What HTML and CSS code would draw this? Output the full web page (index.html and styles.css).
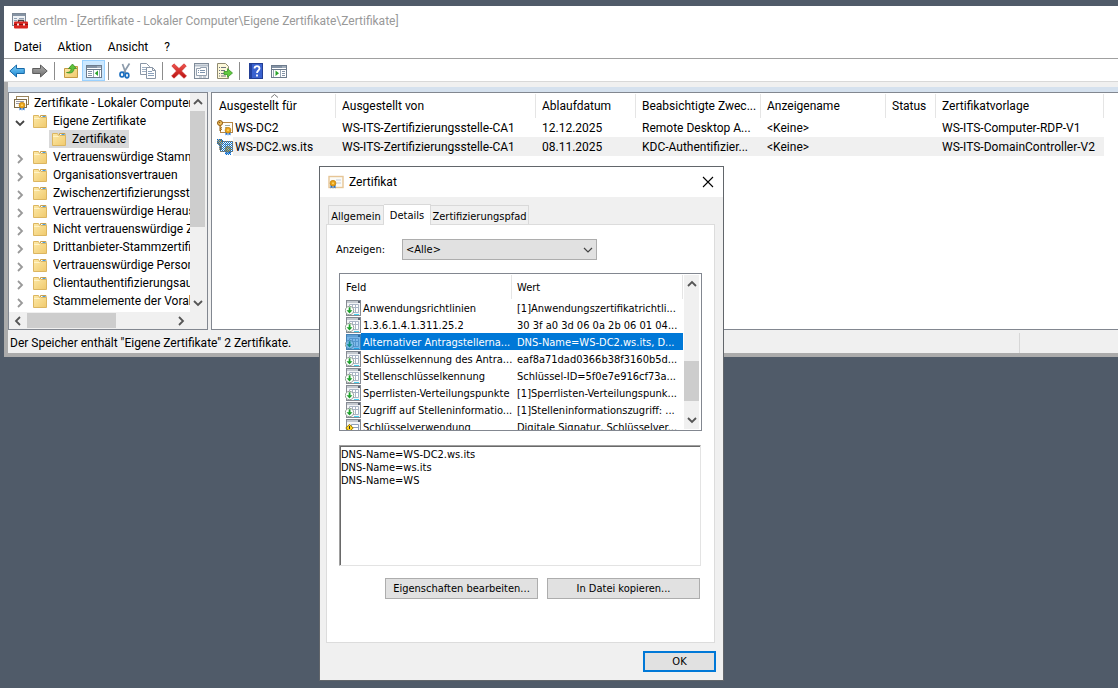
FILE: index.html
```html
<!DOCTYPE html>
<html lang="de">
<head>
<meta charset="utf-8">
<title>certlm - Zertifikate</title>
<link rel="stylesheet" href="styles.css">
</head>
<body>
<svg class="defs" aria-hidden="true">
  <defs>
    <linearGradient id="gFolder" x1="0" y1="0" x2="1" y2="1"><stop offset="0" stop-color="#fdeaa9"/><stop offset="1" stop-color="#f0c96c"/></linearGradient>
    <linearGradient id="gBlue" x1="0" y1="0" x2="0" y2="1"><stop offset="0" stop-color="#7fd0fa"/><stop offset="1" stop-color="#1c86cf"/></linearGradient>
    <linearGradient id="gGray" x1="0" y1="0" x2="0" y2="1"><stop offset="0" stop-color="#b0b0b0"/><stop offset="1" stop-color="#6c6c6c"/></linearGradient>
    <linearGradient id="gRed" x1="0" y1="0" x2="0" y2="1"><stop offset="0" stop-color="#f0564e"/><stop offset="1" stop-color="#b80f0f"/></linearGradient>
    <pattern id="dots" width="2" height="2" patternUnits="userSpaceOnUse"><path d="M0 0h1v1H0zM1 1h1v1H1z" fill="#0a6fce" shape-rendering="crispEdges"/></pattern>
    <symbol id="folder" viewBox="0 0 16 16">
      <path d="M8.500 5V2.500h5.500V5" fill="#fff" stroke="#c9a04c"/>
      <path d="M10.500 3.500h3" stroke="#4a9fe0"/>
      <path d="M1.500 2.500h5l1 2h7v10h-13z" fill="url(#gFolder)" stroke="#dcb661"/>
      <path d="M2 5.500h5.500l1-1" fill="none" stroke="#fff3c8"/>
    </symbol>
    <symbol id="chev-r" viewBox="0 0 10 10"><path d="M3 1l4 4-4 4" fill="none" stroke="currentColor" stroke-width="1.800"/></symbol>
    <symbol id="chev-l" viewBox="0 0 10 10"><path d="M7 1L3 5l4 4" fill="none" stroke="currentColor" stroke-width="1.800"/></symbol>
    <symbol id="chev-d" viewBox="0 0 10 10"><path d="M1 3l4 4 4-4" fill="none" stroke="currentColor" stroke-width="1.800"/></symbol>
    <symbol id="chev-u" viewBox="0 0 10 10"><path d="M1 7l4-4 4 4" fill="none" stroke="currentColor" stroke-width="1.800"/></symbol>
    <symbol id="chev-thin" viewBox="0 0 10 10"><path d="M1 3l4 4 4-4" fill="none" stroke="currentColor" stroke-width="1.200"/></symbol>
    <symbol id="ribbon" viewBox="0 0 8 9">
      <path d="M1.500 4.500h2v4l-1-1-1 1zM4.500 4.500h2v4l-1-1-1 1z" fill="#1f6fd0"/>
      <circle cx="4" cy="3.200" r="2.900" fill="#e8a21a" stroke="#b97808" stroke-width=".6"/><circle cx="4" cy="3.200" r="1" fill="#ffd766"/>
    </symbol>
    <symbol id="keycert" viewBox="0 0 16 16">
      <rect x="3.500" y="2.500" width="12" height="10" fill="#fffdf6" stroke="#b78746"/>
      <path d="M8 5.500h5M8 7.500h2" stroke="#9aa"/>
      <circle cx="3" cy="3" r="2.500" fill="#f2c25c" stroke="#8f5a14"/><circle cx="2.500" cy="2.500" r=".8" fill="#8f5a14"/><path d="M3 5.500v5.500l1.500-1.500L3.500 8.500 5 7.500" fill="#f2c25c" stroke="#8f5a14"/>
      <use href="#ribbon" x="7" y="7" width="8" height="9"/>
    </symbol>
    <symbol id="ext" viewBox="0 0 16 16">
      <rect x="1.500" y=".5" width="14" height="15" fill="#f3f4f6" stroke="#858a92"/>
      <path d="M2 2h11" stroke="#c3c8cf" stroke-width="2"/><path d="M13 1h2v2h-2z" fill="#5b6270"/>
      <path d="M4.500 4.500h9v8h-9zM4.500 7.500h9M7.500 4.500v8M10.500 4.500v8" fill="#fff" stroke="#a9b4c4"/>
      <path d="M9 14.500h5" stroke="#47d0ee"/>
      <circle cx="4.500" cy="10.500" r="4.200" fill="#fff" stroke="#7d8a7d" stroke-width=".8"/>
      <path d="M3.700 7.300h1.800v3h2l-3 3.300-3-3.300h2.200z" fill="#1fa12c"/>
    </symbol>
    <symbol id="extkey" viewBox="0 0 16 16">
      <rect x="1.500" y=".5" width="14" height="15" fill="#f3f4f6" stroke="#858a92"/>
      <path d="M2 2h11" stroke="#c3c8cf" stroke-width="2"/><path d="M13 1h2v2h-2z" fill="#5b6270"/>
      <path d="M6.500 5.500h7v6h-7zM6.500 8.500h7" fill="#fff" stroke="#8fa0b8"/>
      <path d="M.8 9l3.700-3.700L8.200 9l-3.700 3.700z" fill="#ffd21e" stroke="#9b7a00"/><path d="M4.500 7v3" stroke="#333"/>
    </symbol>
  </defs>
</svg>

<main class="desktop">
<section class="mmc" aria-label="certlm">
  <header class="titlebar">
    <svg class="app-icon" viewBox="0 0 16 16">
      <rect x=".5" y=".5" width="13" height="12" fill="#eef1f5" stroke="#7d8896"/>
      <path d="M1 2h12" stroke="#8593a4" stroke-width="2"/><path d="M2 5.500h3M2 7.500h3M7 5.500h5" stroke="#8fa0b4"/>
      <path d="M6.500 9V7.500h5V9" fill="none" stroke="#444" stroke-width="1.300"/>
      <rect x="2" y="8.500" width="14" height="7" rx="1" fill="#d9241f"/><path d="M2 11.500h14" stroke="#8d1010"/><path d="M5 10.500h2v2H5zM11 10.500h2v2h-2z" fill="#f6e6e6"/>
    </svg>
    <h1 class="title">certlm - [Zertifikate - Lokaler Computer\Eigene Zertifikate\Zertifikate]</h1>
  </header>
  <nav class="menubar">
    <button>Datei</button><button>Aktion</button><button>Ansicht</button><button>?</button>
  </nav>
  <div class="toolbar">
    <button aria-label="Zurück"><svg viewBox="0 0 16 16"><path d="M.8 8l6.700-6v3.500h7.800v5H7.500V14z" fill="url(#gBlue)" stroke="#1769a8"/></svg></button>
    <button aria-label="Vorwärts"><svg viewBox="0 0 16 16"><path d="M15.200 8L8.500 2v3.500H.7v5h7.800V14z" fill="url(#gGray)" stroke="#5d5d5d"/></svg></button>
    <span class="sep"></span>
    <button aria-label="Nach oben"><svg viewBox="0 0 16 16"><path d="M1.500 5.500h5l1-2h7v11h-13z" fill="url(#gFolder)" stroke="#c49a45"/><path d="M3.500 9.500C7 9.500 8 8 8 5.500H5.500L9.500 1l4 4.500H11C11 9 8.500 11 3.500 9.500z" fill="#5ec13c" stroke="#2f8a1e" stroke-width=".7"/></svg></button>
    <button class="on" aria-label="Konsolenstruktur"><svg viewBox="0 0 16 16"><rect x=".5" y="2.500" width="15" height="12" fill="#fff" stroke="#6d7b8c"/><path d="M1 4h14" stroke="#8392a4" stroke-width="2"/><path d="M11.500 4h1M13.500 4h1" stroke="#fff"/><path d="M1 6.500h14" stroke="#6d7b8c"/><path d="M2 8.500h4M2 10.500h4M2 12.500h4" stroke="#8494a6"/><path d="M7.500 7v7M13.500 7v7" stroke="#9aa7b5"/><path d="M12 7.500v5.500L8.800 10.300z" fill="#2ca52c"/></svg></button>
    <span class="sep"></span>
    <button aria-label="Ausschneiden"><svg viewBox="0 0 16 16"><path d="M5.500 1l3.200 9M12.500 .5L6.500 10" stroke="#8c9bab" stroke-width="1.700" fill="none"/><ellipse cx="5" cy="11.500" rx="2" ry="2.400" fill="none" stroke="#1b6fc0" stroke-width="1.700"/><ellipse cx="10" cy="12.500" rx="1.800" ry="2.300" fill="none" stroke="#1b6fc0" stroke-width="1.700"/></svg></button>
    <button aria-label="Kopieren"><svg viewBox="0 0 16 16"><path d="M.5.5h6l3 3v8h-9z" fill="#fff" stroke="#8a96a6"/><path d="M2 4.500h5M2 6.500h5M2 8.500h5" stroke="#9fb0c4"/><path d="M6.500 4.500h6l3 3v8h-9z" fill="#fff" stroke="#8a96a6"/><path d="M12.500 4.500v3h3" fill="none" stroke="#8a96a6"/><path d="M8 8.500h4M8 10.500h6M8 12.500h6" stroke="#8aa0bb"/></svg></button>
    <span class="sep"></span>
    <button aria-label="Löschen"><svg viewBox="0 0 16 16"><path d="M3 .8l5 4.700 5-4.700L15.300 3 10.500 8l5 5-2.500 2.300L8 10.600l-5 4.600L.6 13l4.900-5L.8 3z" fill="url(#gRed)" stroke="#c22" stroke-width=".6"/></svg></button>
    <button aria-label="Eigenschaften"><svg viewBox="0 0 16 16"><rect x=".5" y=".5" width="14" height="15" fill="#f4f6f8" stroke="#7f8b99"/><path d="M1 2.500h13" stroke="#b5bfca" stroke-width="2"/><path d="M2.500 5.500h4v-1h6v8h-10z" fill="#fff" stroke="#94a1b0"/><path d="M4 7.500h1M6 7.500h5M4 9.500h1M6 9.500h5" stroke="#7c93ad"/><path d="M5 14h3M9 14h3" stroke="#98a4b1"/></svg></button>
    <button aria-label="Liste exportieren"><svg viewBox="0 0 16 16"><path d="M.5.500h8l3 3v12H.5z" fill="#fdf8d9" stroke="#8f8a70"/><path d="M2 4.500h1M4 4.500h5M2 7.500h1M4 7.500h4M2 10.500h1M4 10.500h3M2 13h1M4 13h5" stroke="#6d7480"/><path d="M7 8.500h3.500V5.700L15.500 10l-5 4.300v-2.800H7z" fill="#62c93f" stroke="#37962a" stroke-width=".8"/></svg></button>
    <span class="sep"></span>
    <button aria-label="Hilfe"><svg viewBox="0 0 16 16"><rect x="1.500" y=".5" width="13" height="15" fill="#3a62cf" stroke="#233f94"/><path d="M3 1v14" stroke="#24429f" stroke-width="2"/><path d="M6.500 5.500c0-3.300 5-3.300 5 0 0 2-2.500 2-2.500 4.500M9 11.500v2" fill="none" stroke="#fff" stroke-width="1.800"/></svg></button>
    <button aria-label="Aktionsbereich"><svg viewBox="0 0 16 16"><rect x=".5" y="2.500" width="15" height="12" fill="#fff" stroke="#6d7b8c"/><path d="M1 4h14" stroke="#8392a4" stroke-width="2"/><path d="M11.500 4h1M13.500 4h1" stroke="#fff"/><path d="M1 6.500h14" stroke="#6d7b8c"/><path d="M11 8.500h3M11 10.500h3M11 12.500h3" stroke="#8494a6"/><path d="M2.500 7v7M9.500 7v7" stroke="#9aa7b5"/><path d="M4.500 7.500v5.500l3.500-2.700z" fill="#2ca52c"/></svg></button>
  </div>
  <div class="workspace">
    <div class="panes">
      <aside class="tree-pane">
        <ul class="tree">
          <li class="root"><svg class="ico" viewBox="0 0 16 16"><rect x="3.500" y="1.500" width="12" height="8" fill="#fff" stroke="#9b855c"/><rect x="1.500" y="4.500" width="12" height="8" fill="#fffdf5" stroke="#7c6a48"/><path d="M3 6.500h8M3 8.500h4" stroke="#99a"/><use href="#ribbon" x="5" y="7" width="8" height="9"/></svg><span>Zertifikate - Lokaler Computer</span></li>
          <li class="open"><svg class="tw"><use href="#chev-d"/></svg><svg class="ico"><use href="#folder"/></svg><span>Eigene Zertifikate</span></li>
          <li class="leaf"><div class="sel"><svg class="ico"><use href="#folder"/></svg><span>Zertifikate</span></div></li>
          <li><svg class="tw"><use href="#chev-r"/></svg><svg class="ico"><use href="#folder"/></svg><span>Vertrauenswürdige Stammzertifizierung</span></li>
          <li><svg class="tw"><use href="#chev-r"/></svg><svg class="ico"><use href="#folder"/></svg><span>Organisationsvertrauen</span></li>
          <li><svg class="tw"><use href="#chev-r"/></svg><svg class="ico"><use href="#folder"/></svg><span>Zwischenzertifizierungsstellen</span></li>
          <li><svg class="tw"><use href="#chev-r"/></svg><svg class="ico"><use href="#folder"/></svg><span>Vertrauenswürdige Herausgeber</span></li>
          <li><svg class="tw"><use href="#chev-r"/></svg><svg class="ico"><use href="#folder"/></svg><span>Nicht vertrauenswürdige Zertifikate</span></li>
          <li><svg class="tw"><use href="#chev-r"/></svg><svg class="ico"><use href="#folder"/></svg><span>Drittanbieter-Stammzertifizierung</span></li>
          <li><svg class="tw"><use href="#chev-r"/></svg><svg class="ico"><use href="#folder"/></svg><span>Vertrauenswürdige Personen</span></li>
          <li><svg class="tw"><use href="#chev-r"/></svg><svg class="ico"><use href="#folder"/></svg><span>Clientauthentifizierungsaussteller</span></li>
          <li><svg class="tw"><use href="#chev-r"/></svg><svg class="ico"><use href="#folder"/></svg><span>Stammelemente der Vorabversion</span></li>
        </ul>
        <div class="vbar"><svg><use href="#chev-u"/></svg><div class="thumb tree-thumb"></div><svg><use href="#chev-d"/></svg></div>
        <div class="hbar"><svg><use href="#chev-l"/></svg><div class="thumb"></div><svg><use href="#chev-r"/></svg></div>
      </aside>
      <div class="list-pane">
        <svg class="sort" viewBox="0 0 8 4"><path d="M.5 3.500L4 .5l3.500 3" fill="none" stroke="#777"/></svg>
        <table class="certs">
          <colgroup><col class="c1"><col class="c2"><col class="c3"><col class="c4"><col class="c4"><col class="c5"><col class="c6"></colgroup>
          <thead><tr><th>Ausgestellt für</th><th>Ausgestellt von</th><th>Ablaufdatum</th><th>Beabsichtigte Zwec...</th><th>Anzeigename</th><th>Status</th><th>Zertifikatvorlage</th></tr></thead>
          <tbody>
            <tr><td class="name"><div><svg class="ico"><use href="#keycert"/></svg><span>WS-DC2</span></div></td><td>WS-ITS-Zertifizierungsstelle-CA1</td><td>12.12.2025</td><td>Remote Desktop A...</td><td>&lt;Keine&gt;</td><td></td><td>WS-ITS-Computer-RDP-V1</td></tr>
            <tr class="hot"><td class="name"><div><svg class="ico" viewBox="0 0 16 16"><use href="#keycert"/><path d="M0 0h6v2h10v11h-2v3H8v-3H5L3 12 2 6 0 5z" fill="url(#dots)"/></svg><span>WS-DC2.ws.its</span></div></td><td>WS-ITS-Zertifizierungsstelle-CA1</td><td>08.11.2025</td><td>KDC-Authentifizier...</td><td>&lt;Keine&gt;</td><td></td><td>WS-ITS-DomainController-V2</td></tr>
          </tbody>
        </table>
      </div>
    </div>
    <footer class="status"><span class="msg">Der Speicher enthält "Eigene Zertifikate" 2 Zertifikate.</span><span class="cell"></span></footer>
  </div>
</section>

<section class="dialog" role="dialog" aria-labelledby="dlg-title">
  <header class="dlg-title">
    <svg class="ico" viewBox="0 0 16 16"><rect x="1" y="2.500" width="14" height="11" fill="#fbfaf6" stroke="#e6c596" stroke-width="1.400"/><path d="M8 6h5M8 9h5" stroke="#dfe4ea" stroke-width="2"/><use href="#ribbon" x="1" y="6" width="8" height="9"/></svg>
    <h2 id="dlg-title">Zertifikat</h2>
    <button class="close" aria-label="Schließen"><svg viewBox="0 0 12 12"><path d="M1 1l10 10M11 1L1 11" stroke="#000" stroke-width="1.100"/></svg></button>
  </header>
  <div class="dlg-body">
    <div class="tabs" role="tablist"><button role="tab" class="t1">Allgemein</button><button role="tab" class="active" aria-selected="true">Details</button><button role="tab" class="t3">Zertifizierungspfad</button></div>
    <div class="page">
      <div class="show-row">
        <label for="show">Anzeigen:</label>
        <div class="combo"><select id="show"><option>&lt;Alle&gt;</option></select><svg><use href="#chev-thin"/></svg></div>
      </div>
      <div class="fields-box">
        <table class="fields">
          <colgroup><col class="f1"><col class="f2"></colgroup>
          <thead><tr><th>Feld</th><th>Wert</th></tr></thead>
          <tbody>
            <tr><td><div><svg><use href="#ext"/></svg><span>Anwendungsrichtlinien</span></div></td><td>[1]Anwendungszertifikatrichtli...</td></tr>
            <tr><td><div><svg><use href="#ext"/></svg><span>1.3.6.1.4.1.311.25.2</span></div></td><td>30 3f a0 3d 06 0a 2b 06 01 04...</td></tr>
            <tr class="picked"><td><div><svg viewBox="0 0 16 16"><use href="#ext"/><rect x="1" width="15" height="16" fill="#0078d7" opacity=".5"/></svg><span>Alternativer Antragstellerna...</span></div></td><td>DNS-Name=WS-DC2.ws.its, D...</td></tr>
            <tr><td><div><svg><use href="#ext"/></svg><span>Schlüsselkennung des Antra...</span></div></td><td>eaf8a71dad0366b38f3160b5d...</td></tr>
            <tr><td><div><svg><use href="#ext"/></svg><span>Stellenschlüsselkennung</span></div></td><td>Schlüssel-ID=5f0e7e916cf73a...</td></tr>
            <tr><td><div><svg><use href="#ext"/></svg><span>Sperrlisten-Verteilungspunkte</span></div></td><td>[1]Sperrlisten-Verteilungspunk...</td></tr>
            <tr><td><div><svg><use href="#ext"/></svg><span>Zugriff auf Stelleninformatio...</span></div></td><td>[1]Stelleninformationszugriff: ...</td></tr>
            <tr><td><div><svg><use href="#extkey"/></svg><span>Schlüsselverwendung</span></div></td><td>Digitale Signatur, Schlüsselver...</td></tr>
          </tbody>
        </table>
        <div class="vbar"><svg><use href="#chev-u"/></svg><div class="thumb fields-thumb"></div><svg><use href="#chev-d"/></svg></div>
      </div>
      <textarea class="value" aria-label="Wert" readonly>DNS-Name=WS-DC2.ws.its
DNS-Name=ws.its
DNS-Name=WS</textarea>
      <div class="actions"><button class="btn">Eigenschaften bearbeiten...</button><button class="btn">In Datei kopieren...</button></div>
    </div>
    <div class="dlg-foot"><button class="btn ok">OK</button></div>
  </div>
</section>
</main>
</body>
</html>
```

FILE: styles.css
```css
* { box-sizing: border-box; }
body { margin: 0; background: #505b69; color: #000; font: 12px/18px Roboto, "Open Sans", sans-serif; }
button, select, textarea { font: inherit; color: inherit; margin: 0; padding: 0; border: 0; border-radius: 0; background: none; }
h1, h2 { margin: 0; font-size: 12px; font-weight: 400; }
table { border-collapse: separate; border-spacing: 0; table-layout: fixed; }
th { font-weight: 400; text-align: left; }
td, th { padding: 0; white-space: nowrap; overflow: hidden; }
svg { display: block; flex: none; }
.defs { position: absolute; width: 0; height: 0; }
.ico { width: 16px; height: 16px; }

.desktop { position: relative; min-height: 100vh; padding: 6px 0 0 4px; overflow: hidden; }
.mmc { background: #fff; }
.titlebar { display: flex; align-items: center; gap: 5px; height: 30px; padding-left: 8px; }
.app-icon { width: 16px; height: 16px; }
.title { color: #999; }
.menubar { display: flex; gap: 16px; height: 23px; padding: 0 10px 1px; border-bottom: 1px solid #a0a0a0; }
.toolbar { display: flex; align-items: center; height: 23px; padding: 1px 0 0 1px; border-bottom: 1px solid #d8d8d8; }
.toolbar button { display: grid; place-items: center; width: 23px; height: 21px; }
.toolbar svg { width: 16px; height: 16px; }
.toolbar .on { background: #cce8ff; border: 1px solid #99d1ff; }
.sep { width: 1px; height: 18px; margin: 0 4px 0 3px; background: #8c8c8c; }

.workspace { padding-top: 5px; border: solid #ababab; border-width: 0 0 4px 4px; background: #f0f0f0; }
.panes { display: flex; gap: 3px; border-top: 5px solid #d5e1ee; }
.tree-pane, .list-pane { border: 1px solid #828790; background: #fff; }
.tree-pane { display: grid; grid-template: 219px 17px / 1fr 17px; width: 200px; }
.tree { margin: 0; padding: 1px 0 0 4px; list-style: none; overflow: hidden; }
.tree li { display: flex; align-items: center; height: 18px; white-space: nowrap; }
.tree .ico { margin-right: 5px; }
.tree .tw { width: 10px; height: 10px; margin: 3px 7px 0 2px; color: #999; }
.tree .open .tw { color: #444; }
.tree .leaf { padding-left: 36px; }
.sel { display: flex; align-items: center; height: 18px; padding: 0 3px 0 2px; background: #d9d9d9; }
.vbar { display: flex; flex-direction: column; align-items: center; background: #f0f0f0; }
.vbar svg, .hbar svg { width: 10px; height: 10px; margin: 4px; color: #555; }
.thumb { background: #cdcdcd; }
.tree-pane .vbar { padding-right: 2px; }
.tree-thumb { width: 15px; height: 116px; margin-bottom: auto; }
.hbar { display: flex; align-items: center; background: #f0f0f0; }
.tree-pane::after { content: ""; background: #f0f0f0; }
.hbar .thumb { width: 89px; height: 15px; margin-right: auto; }

.list-pane { position: relative; flex: 1; min-width: 0; padding-top: 1px; border-right: 0; overflow: hidden; }
.sort { position: absolute; left: 58px; top: 1px; width: 9px; height: 4px; }
.certs { width: 892px; }
.c1 { width: 124px; } .c2 { width: 200px; } .c3 { width: 100px; } .c4 { width: 125px; } .c5 { width: 50px; } .c6 { width: 168px; }
.certs th { height: 24px; padding-left: 6px; border-right: 1px solid #e5e5e5; }
.certs th:first-child { padding-left: 7px; }
.certs td { height: 19px; padding-left: 6px; }
.certs .name { padding-left: 5px; }
.name div { display: flex; align-items: center; height: 19px; gap: 2px; }
.hot td { background: #f0f0f0; }
.hot .name { background: linear-gradient(to right, #fff 21px, #f0f0f0 21px); }

.status { display: flex; align-items: center; height: 23px; padding: 2px 0 0 2px; }
.msg { flex: 1; }
.cell { width: 99px; height: 20px; border-left: 1px solid #d7d7d7; }

.dialog { position: absolute; left: 319px; top: 166px; width: 405px; border: 1px solid #62666b; background: #f0f0f0; font: 11px/13px "DejaVu Sans Condensed", "DejaVu Sans", sans-serif; font-stretch: condensed; }
.dlg-title { display: flex; align-items: center; gap: 5px; height: 30px; padding: 0 9px 1px 8px; background: #fff; }
.dlg-title h2 { font: 12px/18px Roboto, sans-serif; }
.close { margin-left: auto; }
.close svg { width: 12px; height: 12px; }
.dlg-body { padding: 7px 8px 8px 6px; }
.tabs { display: flex; align-items: flex-end; padding-left: 2px; }
.tabs button { height: 19px; padding-top: 2px; border: 1px solid #d9d9d9; border-bottom: 0; white-space: nowrap; }
.tabs button + button { border-left: 0; }
.tabs .t1 { width: 56px; }
.tabs .t3 { width: 98px; }
.tabs .active { width: 47px; height: 21px; margin-bottom: -1px; padding: 0; background: #fff; z-index: 1; }
.page { height: 419px; padding: 14px 12px 0; border: 1px solid #dcdcdc; background: #fff; }
.show-row { display: flex; align-items: center; margin-left: -3px; }
.show-row label { width: 66px; }
.combo { display: flex; align-items: center; width: 195px; height: 21px; border: 1px solid #adadad; background: #e1e1e1; }
.combo select { flex: 1; width: 100%; height: 19px; padding-left: 3px; appearance: none; }
.combo svg { width: 10px; height: 10px; margin-right: 3px; color: #444; pointer-events: none; }
.fields-box { display: flex; height: 158px; margin-top: 13px; padding: 1px; border: 1px solid #828790; overflow: hidden; }
.fields { width: 342px; height: max-content; }
.f1 { width: 171px; } .f2 { width: 171px; }
.fields th { height: 24px; padding: 0 0 0 5px; border-right: 1px solid #e5e5e5; }
.fields td { height: 17px; padding-left: 5px; }
.fields td:first-child { padding-left: 4px; }
.fields td div { display: flex; align-items: center; height: 17px; padding-top: 1px; gap: 2px; }
.fields td + td { padding-top: 1px; }
.fields svg { width: 16px; height: 16px; }
.picked { color: #fff; }
.picked td { background: #0078d7; }
.picked td:first-child { background: linear-gradient(to right, #fff 20px, #0078d7 20px); }
.fields-box .vbar { width: 15px; margin-left: 1px; }
.fields-box .vbar svg { margin: 4px 3px; }
.fields-thumb { width: 15px; height: 40px; margin: 68px 0 auto; }
.value { display: block; width: 362px; height: 121px; margin-top: 14px; padding: 2px 1px; border: 1px solid; border-color: #a0a0a0 #e3e3e3 #e3e3e3 #a0a0a0; box-shadow: inset 1px 1px #696969; background: #fff; resize: none; line-height: 13px; }
.actions { display: flex; justify-content: flex-end; gap: 9px; margin-top: 12px; padding-right: 2px; }
.btn { width: 153px; height: 21px; border: 1px solid #adadad; background: #e1e1e1; }
.dlg-foot { display: flex; justify-content: flex-end; margin: 8px -1px 0 0; }
.ok { width: 73px; border: 2px solid #0078d7; }
```
